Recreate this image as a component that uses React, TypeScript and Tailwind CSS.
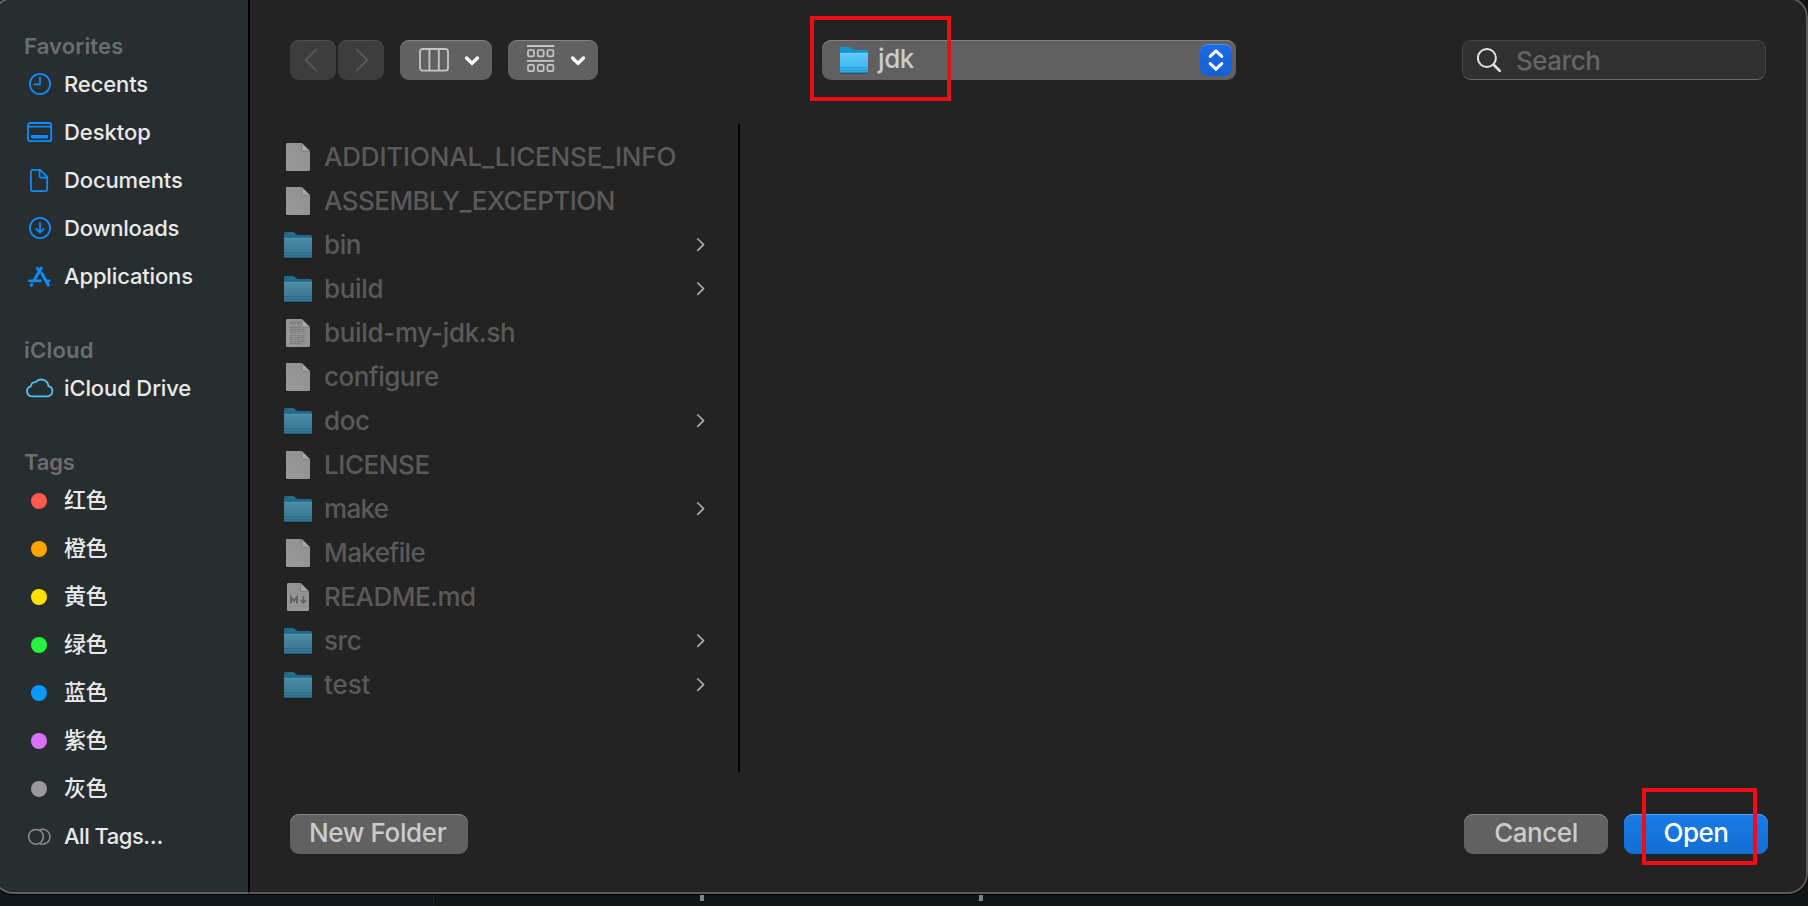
import React from "react";

type Item = { label: string; tracking: string; icon: React.ReactNode };

const blue = "#0a8cff";

const ClockIcon = () => (
  <svg width="28" height="28" viewBox="0 0 28 28" fill="none" stroke={blue} strokeWidth="1.8" strokeLinecap="round" strokeLinejoin="round">
    <circle cx="14" cy="14" r="10.1" />
    <path d="M14 7.4V14.3H8.6" />
  </svg>
);
const DesktopIcon = () => (
  <svg width="28" height="28" viewBox="0 0 28 28" fill="none" stroke={blue} strokeWidth="1.8">
    <rect x="2" y="5" width="23.2" height="18.2" rx="2" />
    <path d="M2 8.6H25.2" strokeWidth="1.6" />
    <rect x="5" y="17" width="17" height="3.4" rx="0.8" fill={blue} stroke="none" />
  </svg>
);
const DocumentIcon = () => (
  <svg width="28" height="28" viewBox="0 0 28 28" fill="none" stroke={blue} strokeWidth="1.8" strokeLinejoin="round">
    <path d="M6.6 3.9H14.2L21.2 11V23.2A1.9 1.9 0 0 1 19.3 25.1H6.8A1.9 1.9 0 0 1 4.9 23.2V5.8A1.9 1.9 0 0 1 6.6 3.9Z" />
    <path d="M13.6 4V10.2A1.4 1.4 0 0 0 15 11.6H21" />
  </svg>
);
const DownloadIcon = () => (
  <svg width="28" height="28" viewBox="0 0 28 28" fill="none" stroke={blue} strokeWidth="1.8" strokeLinecap="round" strokeLinejoin="round">
    <circle cx="14" cy="14" r="10.1" />
    <path d="M14 9V18.4M10.2 14.9L14 18.6L17.8 14.9" />
  </svg>
);
const ApplicationsIcon = () => (
  <svg width="28" height="28" viewBox="0 0 28 28" fill="none" stroke={blue} strokeWidth="3.1" strokeLinecap="round">
    <path d="M15.2 6.2L8.4 18" />
    <path d="M11.4 6.2L13 8.8" strokeWidth="2.8" />
    <path d="M15.8 11.4L22.4 22.9" />
    <path d="M3.4 18.9H14.6M20.6 18.9H23.2" strokeWidth="2.7" />
    <path d="M5.8 22.6L5.3 23.3" />
  </svg>
);
const CloudIcon = () => (
  <svg width="30" height="28" viewBox="0 0 30 28" fill="none" stroke="#4dc3f7" strokeWidth="1.8" strokeLinejoin="round" className="-mr-0.5">
    <path d="M5.7 22.3A5.1 5.1 0 0 1 4.8 12.3A4.6 4.6 0 0 1 9.6 8.1A7.4 7.4 0 0 1 22.5 12.1A5.2 5.2 0 0 1 21.7 22.3Z" />
  </svg>
);
const AllTagsIcon = () => (
  <svg width="28" height="28" viewBox="0 0 28 28" fill="none" stroke="#8b8d8e" strokeWidth="1.5">
    <circle cx="10" cy="14.8" r="7.4" />
    <path d="M13.6 8A7.4 7.4 0 1 1 13.6 21.6" />
  </svg>
);
const Dot = ({ color }: { color: string }) => (
  <span className="flex w-7 justify-center pt-px pr-0.5">
    <span className={`size-4 rounded-full ${color}`} />
  </span>
);

const favorites: Item[] = [
  { label: "Recents", tracking: "tracking-[-0.12px]", icon: <ClockIcon /> },
  { label: "Desktop", tracking: "tracking-[-0.05px]", icon: <DesktopIcon /> },
  { label: "Documents", tracking: "tracking-[-0.14px]", icon: <DocumentIcon /> },
  { label: "Downloads", tracking: "tracking-[-0.24px]", icon: <DownloadIcon /> },
  { label: "Applications", tracking: "tracking-[-0.15px]", icon: <ApplicationsIcon /> },
];
const cloud: Item[] = [{ label: "iCloud Drive", tracking: "tracking-[-0.12px]", icon: <CloudIcon /> }];
const cjk = "tracking-[-0.3px]";
const tags: Item[] = [
  { label: "红色", tracking: cjk, icon: <Dot color="bg-[#ff5b4f]" /> },
  { label: "橙色", tracking: cjk, icon: <Dot color="bg-[#ffa500]" /> },
  { label: "黄色", tracking: cjk, icon: <Dot color="bg-[#ffe100]" /> },
  { label: "绿色", tracking: cjk, icon: <Dot color="bg-[#28f340]" /> },
  { label: "蓝色", tracking: cjk, icon: <Dot color="bg-[#0a99ff]" /> },
  { label: "紫色", tracking: cjk, icon: <Dot color="bg-[#d873ff]" /> },
  { label: "灰色", tracking: cjk, icon: <Dot color="bg-[#98989d]" /> },
  { label: "All Tags…", tracking: "tracking-[-0.5px]", icon: <AllTagsIcon /> },
];

const Section = ({ title, tracking, items }: { title: string; tracking: string; items: Item[] }) => (
  <section>
    <h2 className={`flex h-7 items-center pl-6 text-[22px] leading-7 font-semibold text-[#6a6e70] ${tracking}`}>{title}</h2>
    <ul>
      {items.map((it) => (
        <li key={it.label} className="flex h-12 items-center gap-2.5 pl-[26px] text-[22px] font-medium text-[#e9eaea]">
          {it.icon}
          <span className={`whitespace-nowrap ${it.tracking}`}>{it.label}</span>
        </li>
      ))}
    </ul>
  </section>
);

const Folder = ({ dim = false }: { dim?: boolean }) => {
  const id = dim ? "folder-dim" : "folder-lit";
  return (
    <svg width="28" height="28" viewBox="0 0 28 28" className="shrink-0 overflow-visible">
      <defs>
        <linearGradient id={id} x1="0" y1="0" x2="0" y2="1">
          <stop offset="0" stopColor={dim ? "#4a8ba5" : "#5fcbfd"} />
          <stop offset="1" stopColor={dim ? "#34738f" : "#31aee8"} />
        </linearGradient>
      </defs>
      <rect x="0.5" y="6" width="27" height="22" rx="1.5" fill="#000" opacity="0.25" />
      <path d="M0 2.6Q0 1 1.6 1H8.6Q9.8 1 10.6 1.7L12.2 3.1Q13 4 14.2 4H26.4Q28 4 28 5.6V10H0Z" fill={dim ? "#216a8e" : "#1493d2"} />
      <path d="M0 8Q0 7 1 7H27Q28 7 28 8V25.6Q28 27 26.6 27H1.4Q0 27 0 25.6Z" fill={`url(#${id})`} />
      <path d="M0 7.3H28" stroke={dim ? "#5b9bb2" : "#7ed7ff"} strokeWidth="0.7" />
      <path d="M0 21.8H28M0 24.6H28" stroke={dim ? "#2a6884" : "#1f97d2"} strokeWidth="0.9" />
      <path d="M0.5 26.5H27.5" stroke={dim ? "#1f6381" : "#128fcc"} strokeWidth="1" />
    </svg>
  );
};

const FileIcon = ({ kind }: { kind: "file" | "script" | "markdown" }) => (
  <svg width="28" height="28" viewBox="0 0 28 28" className="shrink-0">
    <defs>
      <linearGradient id="paper" x1="0" y1="1" x2="1" y2="0">
        <stop offset="0" stopColor="#9a9a9a" />
        <stop offset="1" stopColor="#909090" />
      </linearGradient>
    </defs>
    {kind === "markdown" ? (
      <>
        <path d="M3 1.2Q3 0 4.2 0H16.6L25 8.4V26.8Q25 28 23.8 28H4.2Q3 28 3 26.8Z" fill="url(#paper)" />
        <path d="M16.6 0L25 8.4H17.6Q16.6 8.4 16.6 7.4Z" fill="#a6a6a6" />
        <path d="M16.6 0V7.4Q16.6 8.4 17.6 8.4H25" fill="none" stroke="#707070" strokeWidth="0.7" />
        <path d="M5 11H23M5 23.5H23" stroke="#858585" strokeWidth="0.8" />
        <path d="M7 20.4V14L10 18L13 14V20.4" fill="none" stroke="#606060" strokeWidth="1.9" />
        <path d="M19.4 13V19.6M16.6 17L19.4 19.9L22.2 17" fill="none" stroke="#606060" strokeWidth="1.7" />
      </>
    ) : (
      <>
        <path d="M2 1.2Q2 0 3.2 0H17.7L26 8.3V26.8Q26 28 24.8 28H3.2Q2 28 2 26.8Z" fill="url(#paper)" />
        {kind === "script" && (
          <g stroke="#7a7a7a" strokeWidth="1.1" strokeDasharray="3.4 0.5 2 0.6 4 0.5">
            <path d="M6 3.4H16.5M6 5H16M6 8.4H16.5M6 10.4H21.5M6 12.2H21M6 14H13M6 16.8H21.5M6 18.6H20.5M6 20.8H21.5M6 22.6H21M6 24.6H18" />
          </g>
        )}
        <path d="M17.7 0L26 8.3H18.7Q17.7 8.3 17.7 7.3Z" fill="#a6a6a6" />
        <path d="M17.7 0V7.3Q17.7 8.3 18.7 8.3H26" fill="none" stroke="#707070" strokeWidth="0.7" />
      </>
    )}
  </svg>
);

type Entry = { name: string; kind: "folder" | "file" | "script" | "markdown"; tracking: string };
const entries: Entry[] = [
  { name: "ADDITIONAL_LICENSE_INFO", kind: "file", tracking: "tracking-[-0.18px]" },
  { name: "ASSEMBLY_EXCEPTION", kind: "file", tracking: "tracking-[-0.55px]" },
  { name: "bin", kind: "folder", tracking: "tracking-[-0.4px]" },
  { name: "build", kind: "folder", tracking: "tracking-[-0.35px]" },
  { name: "build-my-jdk.sh", kind: "script", tracking: "tracking-[-0.32px]" },
  { name: "configure", kind: "file", tracking: "tracking-[-0.52px]" },
  { name: "doc", kind: "folder", tracking: "tracking-[-0.4px]" },
  { name: "LICENSE", kind: "file", tracking: "tracking-[-0.42px]" },
  { name: "make", kind: "folder", tracking: "tracking-[-0.7px]" },
  { name: "Makefile", kind: "file", tracking: "tracking-[-0.6px]" },
  { name: "README.md", kind: "markdown", tracking: "tracking-[-0.5px]" },
  { name: "src", kind: "folder", tracking: "tracking-[-0.4px]" },
  { name: "test", kind: "folder", tracking: "tracking-[-0.1px]" },
];

const ChevronDown = () => (
  <svg width="16" height="12" viewBox="0 0 16 12" fill="none" stroke="#fff" strokeWidth="3.4" strokeLinecap="round" strokeLinejoin="round">
    <path d="M2.6 3L8 8.4L13.4 3" />
  </svg>
);

const raised = "shadow-[inset_0_1px_0_#848484]";

export default function App() {
  return (
    <div className="h-[906px] w-[1808px] overflow-hidden bg-[#101517] font-['Inter','Noto_Sans_CJK_SC',sans-serif]">
      <div className="relative -mt-[3px] -ml-[7px] flex h-[897px] w-[1815px] overflow-hidden rounded-[20px] bg-[#232323] shadow-[0_1px_0_#000]">
        <aside className="flex w-[257px] flex-col gap-9 border-r-2 border-black bg-[#282d2f] pt-[35px] pl-[7px]">
          <Section title="Favorites" tracking="tracking-[0.15px]" items={favorites} />
          <Section title="iCloud" tracking="tracking-[0.25px]" items={cloud} />
          <Section title="Tags" tracking="tracking-[-0.2px]" items={tags} />
        </aside>

        <main className="flex flex-1 flex-col pt-[3px] font-[450]">
          <header className="flex h-[124px] items-start pt-10 pl-10">
            <div className="flex gap-0.5">
              <button className="flex h-10 w-[46px] items-center justify-center rounded-[9px] bg-[#3d3d3d] pr-1 shadow-[inset_0_1px_0_#4f4f4f]">
                <svg width="14" height="24" viewBox="0 0 14 24" fill="none" stroke="#575757" strokeWidth="2" strokeLinecap="round" strokeLinejoin="round">
                  <path d="M12.2 1.5L1.6 12L12.2 22.5" />
                </svg>
              </button>
              <button className="flex h-10 w-[46px] items-center justify-center rounded-[9px] bg-[#3d3d3d] pl-0.5 shadow-[inset_0_1px_0_#4f4f4f]">
                <svg width="14" height="24" viewBox="0 0 14 24" fill="none" stroke="#575757" strokeWidth="2" strokeLinecap="round" strokeLinejoin="round">
                  <path d="M1.8 1.5L12.4 12L1.8 22.5" />
                </svg>
              </button>
            </div>
            <button className={`ml-4 flex h-10 w-[92px] items-center rounded-[9px] bg-[#616161] pl-[19px] ${raised}`}>
              <svg width="30" height="24" viewBox="0 0 30 24" fill="none" stroke="#c6c6c6" strokeWidth="1.8">
                <rect x="1" y="1" width="28" height="21.6" rx="2.6" />
                <path d="M10.4 1V22.6M19.8 1V22.6" />
              </svg>
              <span className="ml-[15px] pt-px"><ChevronDown /></span>
            </button>
            <button className={`ml-4 flex h-10 w-[90px] items-center rounded-[9px] bg-[#616161] pl-[19px] ${raised}`}>
              <svg width="28" height="30" viewBox="0 0 28 30" fill="none" stroke="#c6c6c6" strokeWidth="1.7" className="-mt-0.5">
                <path d="M0 2H27.2M0 16.8H27.2" strokeWidth="1.8" />
                <rect x="1" y="6" width="6" height="6.4" rx="1.4" />
                <rect x="10.7" y="6" width="6" height="6.4" rx="1.4" />
                <rect x="20.4" y="6" width="6" height="6.4" rx="1.4" />
                <rect x="1" y="20.8" width="6" height="6.4" rx="1.4" />
                <rect x="10.7" y="20.8" width="6" height="6.4" rx="1.4" />
                <rect x="20.4" y="20.8" width="6" height="6.4" rx="1.4" />
              </svg>
              <span className="ml-[15px] pt-px"><ChevronDown /></span>
            </button>

            <div className={`relative ml-[224px] flex h-10 w-[414px] items-center rounded-[9px] bg-[#606060] pr-1 pl-[18px] ${raised}`}>
              <Folder />
              <span className="-mt-[3px] ml-2.5 flex-1 text-[26px] leading-8 tracking-[-0.4px] text-[#cbcbcb]">jdk</span>
              <span className="flex size-8 items-center justify-center rounded-lg bg-linear-to-b from-[#1a6ae8] to-[#145fd2] shadow-[inset_0_1px_0_#4a8cf0]">
                <svg width="16" height="24" viewBox="0 0 16 24" fill="none" stroke="#fff" strokeWidth="3" strokeLinecap="round" strokeLinejoin="round">
                  <path d="M2.2 8.4L8 2.8L13.8 8.4M2.2 15.6L8 21.2L13.8 15.6" />
                </svg>
              </span>
              <span className="absolute -top-6 -left-3 h-[85px] w-[141px] border-4 border-[#f20d14]" />
            </div>

            <div className="ml-[226px] flex h-10 w-[304px] items-center rounded-[9px] border border-[#464646] border-b-[#6a6a6a] bg-[#303030] pl-3.5">
              <svg width="26" height="26" viewBox="0 0 26 26" fill="none" stroke="#e2e2e2" strokeLinecap="round">
                <circle cx="9.9" cy="11" r="9" strokeWidth="2" />
                <path d="M16.6 17.7L22.8 23.9" strokeWidth="2.7" />
              </svg>
              <span className="mt-px ml-[13px] text-[26px] leading-8 tracking-[-0.5px] text-[#656565]">Search</span>
            </div>
          </header>

          <ul className="h-[648px] w-[490px] border-r-2 border-black pt-[11px]">
            {entries.map((e) => (
              <li key={e.name} className="flex h-11 items-center pr-[31px] pl-[34px] text-[26px] text-[#5a5a5a]">
                {e.kind === "folder" ? <Folder dim /> : <FileIcon kind={e.kind} />}
                <span className={`ml-3 flex-1 leading-8 whitespace-nowrap ${e.tracking}`}>{e.name}</span>
                {e.kind === "folder" && (
                  <svg width="12" height="16" viewBox="0 0 12 16" fill="none" stroke="#ababab" strokeWidth="1.7" strokeLinecap="round" strokeLinejoin="round">
                    <path d="M2.8 2L8.6 7.6L2.8 13.4" />
                  </svg>
                )}
              </li>
            ))}
          </ul>

          <footer className="flex pt-[42px] pr-10 pl-10 text-[26px] leading-[37px]">
            <button className={`h-10 w-[178px] rounded-[9px] bg-[#616161] pb-[3px] pl-[19px] text-left tracking-[-0.36px] whitespace-nowrap text-[#cbcbcb] ${raised}`}>New Folder</button>
            <button className={`ml-auto h-10 w-36 rounded-[9px] bg-[#616161] pb-[3px] tracking-[-0.45px] text-[#cbcbcb] ${raised}`}>Cancel</button>
            <div className="relative ml-4">
              <button className="h-10 w-36 rounded-[9px] bg-linear-to-b from-[#197be9] to-[#136ed2] pb-[3px] tracking-[-0.5px] text-white shadow-[inset_0_1px_0_#56a0f2]">Open</button>
              <span className="absolute -top-[26px] left-[18px] h-[77px] w-[115px] border-4 border-[#f20d14]" />
            </div>
          </footer>
        </main>
        <div className="pointer-events-none absolute inset-0 rounded-[20px] border-2 border-white/25" />
      </div>
      <div className="flex h-3 pt-px">
        <div className="h-full w-[434px] border-r border-[#1d2326] bg-[#11171b]" />
        <div className="ml-[266px] h-1.5 w-1 bg-[#858585]" />
        <div className="ml-[275px] h-1.5 w-1 bg-[#858585]" />
      </div>
    </div>
  );
}
